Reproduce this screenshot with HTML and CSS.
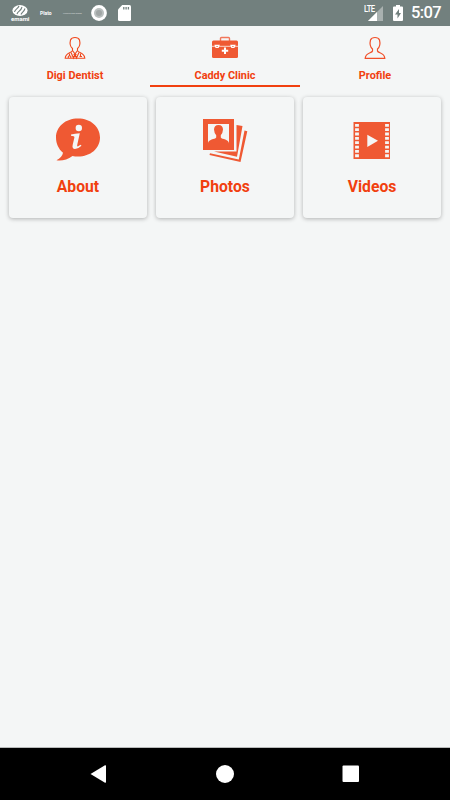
FILE: index.html
```html
<!DOCTYPE html>
<html lang="en">
<head>
<meta charset="utf-8">
<title>Caddy Clinic</title>
<link rel="stylesheet" href="styles.css">
</head>
<body>
<header class="status">
  <div class="brand">
    <svg width="18" height="11" viewBox="0 0 18 11"><ellipse cx="9" cy="5.5" rx="7.6" ry="5.4" fill="#fff"/><path d="M3.5 7C4 4 7 4 8 1M6 9C7 6 10 6 11 2M10 9.500C11 7 13 7 14 3.500" fill="none" stroke="#72807e" stroke-width="1.100"/></svg>
    <span class="brand-name">emami</span>
  </div>
  <span class="plato">Plato</span>
  <span class="tiny">Looking Egg MEMS</span>
  <svg class="disc" width="16" height="16" viewBox="0 0 16 16"><circle cx="8" cy="8" r="7.900" fill="#fff"/><circle cx="8" cy="8" r="5" fill="#b9bfbe"/><circle cx="8" cy="8" r="3" fill="#a0a6a5"/></svg>
  <svg class="sd" width="13" height="16" viewBox="0 0 13 16"><path d="M4.200 0H11.500Q13 0 13 1.500V14.500Q13 16 11.500 16H1.500Q0 16 0 14.500V4.500Z" fill="#fff"/><path d="M5.800 2v2.500M8.100 2v2.500M10.400 2v2.500" stroke="#72807e" stroke-width="1.300"/></svg>
  <div class="signal">
    <svg width="20" height="18" viewBox="0 0 20 18"><path d="M4 17L19 2V17Z" fill="#a9b1b0"/><path d="M4 17L13 8V17Z" fill="#fff"/></svg>
    <span class="lte">LTE</span>
  </div>
  <svg class="battery" width="10" height="16" viewBox="0 0 10 16"><path d="M3 0H7V1.500H9Q10 1.500 10 2.500V15Q10 16 9 16H1Q0 16 0 15V2.500Q0 1.500 1 1.500H3Z" fill="#fff"/><path d="M6 4L2 9.500H4.500V13.500L8 8H6Z" fill="#72807e"/></svg>
  <time class="clock">5:07</time>
</header>
<nav class="tabs">
  <a class="tab">
    <svg width="22" height="24" viewBox="0 0 22 24" fill="none" stroke="#f1481d" stroke-width="1.100"><path d="M8.500 14.500V12.500C5.500 10 6 6 6.500 4Q7.500 1.500 11 1.500T15.500 4C16 6 16.500 10 13.500 12.500V14.500M8.500 14.500C8 17 1.500 16 1.200 22.300H20.800C20.500 16 14 17 13.500 14.500"/><path d="M8.500 14.500L11 18L13.500 14.500M7 16.500L9.500 22L11 18L12.500 22L15 16.500M5.500 17.500V20M16.500 17.500V20"/><path d="M4.300 22V20.500Q5.500 19 6.800 20.500V22M9.500 18.500H12.500M9.500 20.500H12.500M15.500 20.500H18"/></svg>
    <span>Digi Dentist</span>
  </a>
  <a class="tab active">
    <svg width="28" height="24" viewBox="0 0 28 24"><path d="M9.500 5V2.500Q9.500 1.500 10.500 1.500H17.500Q18.500 1.500 18.500 2.500V5" fill="none" stroke="#f1775b" stroke-width="1.400"/><rect x="1" y="4.500" width="26" height="17.500" rx="1.500" fill="#ef5933"/><path d="M1 10.300H27" stroke="#fbd5cb" stroke-width="1"/><path d="M4.200 9.300H8L7.200 11.300H5ZM20 9.300H23.800L23 11.300H20.800Z" fill="#ef5933" stroke="#fff" stroke-width="1.200"/><path d="M14 11.500V18M10.800 14.700H17.200" stroke="#fff" stroke-width="2"/></svg>
    <span>Caddy Clinic</span>
  </a>
  <a class="tab">
    <svg width="22" height="24" viewBox="0 0 22 24" fill="none" stroke="#f1502a" stroke-width="1.200"><path d="M8.500 13C5.500 10.500 6 6 6.500 4Q7.500 1.500 11 1.500T15.500 4C16 6 16.500 10.500 13.500 13V15C14 17.300 20.500 16.500 20.800 22.300H1.200C1.500 16.500 8 17.300 8.500 15Z"/></svg>
    <span>Profile</span>
  </a>
</nav>
<main class="cards">
  <section class="card">
    <svg width="46" height="46" viewBox="0 0 46 46" fill="#ef5933"><path d="M23 1.500C35.500 1.500 45 9.500 45 20.500S35.500 39.500 23 39.500Q20 39.500 17.500 39C12.500 43 6.500 44 1.500 43.300C5 41.500 7.500 39 8 35.800C3.500 32 1 26.500 1 20.500C1 9.500 10.500 1.500 23 1.500Z"/><circle cx="23.800" cy="11" r="3.200" fill="#f4f6f6"/><path d="M16 17.500Q20 16.600 24.800 16.300L22.300 27.500Q21.700 30 23.200 29.300L25.500 27.700L26.500 28.700Q23 32 20 32Q16.700 31.800 17.700 27.700L19.400 20.500Q19.700 18.800 16 18.800Z" fill="#f4f6f6"/></svg>
    <h2>About</h2>
  </section>
  <section class="card">
    <svg width="46" height="46" viewBox="0 0 46 46" fill="#ef5933"><path d="M34.500 8L40.500 9L35 39.800L12 34.600H34.500Z"/><path d="M42.500 13.500L45.300 14.200L38.500 45L7.500 38L8 36.200L36.800 42.500Z"/><path d="M1 2H32V33H1Z"/><path d="M6 7H27V28H6Z" fill="#f4f6f6"/><path d="M16.500 8C19.500 8 21 9.800 21 12.500Q20.700 16.500 18.800 18.300V20.500C20 22.500 27 22 27 26.500V28H6V26.500C6 22 13 22.500 14.200 20.500V18.300Q12.300 16.500 12 12.500C12 9.800 13.500 8 16.500 8Z"/></svg>
    <h2>Photos</h2>
  </section>
  <section class="card">
    <svg width="46" height="46" viewBox="0 0 46 46"><rect x="4.500" y="5" width="36.500" height="37" fill="#ef5933"/><path d="M8 6.900V41M38 6.900V41" stroke="#f4f6f6" stroke-width="3.800" stroke-dasharray="2.800 1.550"/><path d="M18.300 17.700V30L29 23.800Z" fill="#f4f6f6"/></svg>
    <h2>Videos</h2>
  </section>
</main>
<footer class="navbar">
  <svg width="18" height="20" viewBox="0 0 18 20"><path d="M.5 10L15 1.300Q16 1 16 2V18Q16 19 15 18.700Z" fill="#fff"/></svg>
  <svg width="20" height="20" viewBox="0 0 20 20"><circle cx="10" cy="10" r="9" fill="#fff"/></svg>
  <svg width="18" height="20" viewBox="0 0 18 20"><rect x=".5" y="1.500" width="16.500" height="16.500" rx="1" fill="#fff"/></svg>
</footer>
</body>
</html>
```

FILE: styles.css
```css
* { box-sizing: border-box; }
body {
  margin: 0;
  height: 800px;
  display: flex;
  flex-direction: column;
  background: #f4f6f6;
  font-family: Roboto, "Liberation Sans", sans-serif;
  color: #f1400f;
  overflow: hidden;
}
svg { display: block; flex: none; }
.status {
  height: 26px;
  flex: none;
  display: flex;
  align-items: center;
  background: #72807e;
  color: #fff;
  padding: 0 9px 0 11px;
}
.brand { width: 18px; text-align: center; line-height: 0; }
.brand-name { display: block; font-size: 6px; font-weight: 700; line-height: 5px; }
.plato { width: 12px; margin-left: 11px; font-size: 5px; font-weight: 700; white-space: nowrap; }
.tiny { width: 18px; margin-left: 11px; font-size: 2.2px; color: #d5dad9; white-space: nowrap; }
.disc { margin-left: 9.500px; }
.sd { margin-left: 11.500px; }
.signal { position: relative; margin-left: auto; margin-top: -1px; }
.lte { position: absolute; left: 0; top: 0; font-size: 9px; line-height: 10px; letter-spacing: -0.6px; font-weight: 500; transform: scaleX(.85); transform-origin: left; }
.battery { margin-left: 9px; }
.clock { width: 30px; margin-left: 8px; font-size: 16.5px; line-height: 28px; letter-spacing: -0.6px; font-weight: 500; white-space: nowrap; }
.tabs { display: grid; grid-template-columns: repeat(3, 1fr); height: 61px; flex: none; }
.tab {
  display: flex;
  flex-direction: column;
  align-items: center;
  padding-top: 10px;
  font-size: 10.9px;
  font-weight: 700;
  line-height: 13px;
  border-bottom: 2px solid transparent;
}
.tab span { margin-top: 9px; }
.active { border-bottom-color: #f1400f; }
.cards {
  flex: 1;
  display: grid;
  grid-template-columns: repeat(3, 138px);
  grid-auto-rows: 121px;
  gap: 9px;
  padding: 10px 9px 9px;
}
.card {
  display: flex;
  flex-direction: column;
  align-items: center;
  padding-top: 20px;
  border-radius: 4px;
  background: #f4f6f6;
  box-shadow: 0 1px 4px rgba(0, 0, 0, 0.28);
}
.card h2 { margin: 14px 0 0; font-size: 15.7px; line-height: 20px; font-weight: 700; }
.navbar {
  height: 53px;
  flex: none;
  display: flex;
  justify-content: space-between;
  align-items: center;
  padding: 0 90px;
  background: #000;
  border-top: 1px solid #b8baba;
}
```
